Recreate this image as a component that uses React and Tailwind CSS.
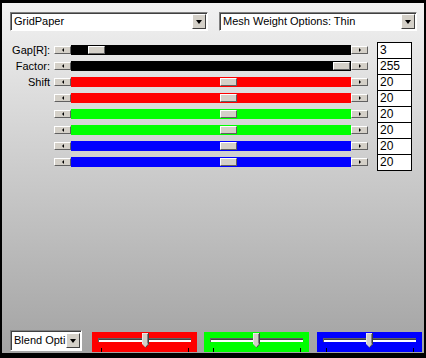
import React from "react";

const rows = [
  { label: "Gap[R]:", color: "bg-black", thumb: 17, value: "3" },
  { label: "Factor:", color: "bg-black", thumb: 262, value: "255" },
  { label: "Shift", color: "bg-[#ff0000]", thumb: 149, value: "20" },
  { label: "", color: "bg-[#ff0000]", thumb: 149, value: "20" },
  { label: "", color: "bg-[#00ff00]", thumb: 149, value: "20" },
  { label: "", color: "bg-[#00ff00]", thumb: 149, value: "20" },
  { label: "", color: "bg-[#0000ff]", thumb: 149, value: "20" },
  { label: "", color: "bg-[#0000ff]", thumb: 149, value: "20" },
];

const panels = [
  { color: "bg-[#ff0000]", thumb: 50 },
  { color: "bg-[#00ff00]", thumb: 49 },
  { color: "bg-[#0000ff]", thumb: 49 },
];

// little raised arrow button at each end of the scroll bars
const ArrowBtn = ({ dir }) => (
  <div className="w-[17px] h-[8px] bg-[#d4d0c8] border border-t-white border-l-white border-r-[#606060] border-b-[#606060] flex items-center justify-center shrink-0">
    <div
      className={
        dir === "left"
          ? "w-0 h-0 border-y-[2px] border-y-transparent border-r-[2px] border-r-black"
          : "w-0 h-0 border-y-[2px] border-y-transparent border-l-[2px] border-l-black"
      }
    />
  </div>
);

const DropArrow = () => (
  <div className="w-[14px] h-[15px] bg-[#d4d0c8] border border-t-white border-l-white border-r-[#404040] border-b-[#404040] flex items-center justify-center shrink-0">
    <div className="w-0 h-0 border-x-[3.5px] border-x-transparent border-t-[4px] border-t-black" />
  </div>
);

const Combo = ({ text, className }) => (
  <div
    className={
      "h-[19px] bg-white border border-t-[#808080] border-l-[#808080] border-b-white border-r-white shadow-[inset_1px_1px_0_#404040] flex items-center pl-[3px] pr-[1px] " +
      className
    }
  >
    <span className="flex-1 whitespace-nowrap text-black text-[11px] leading-none">
      {text}
    </span>
    <DropArrow />
  </div>
);

const ScrollRow = ({ row }) => (
  <div className="flex items-center h-[16px]">
    <div className="w-[40px] text-right text-[11px] leading-none text-black whitespace-nowrap">
      {row.label}
    </div>
    <div className="ml-[4px] w-[314px] flex items-center">
      <ArrowBtn dir="left" />
      <div className={"relative flex-1 h-[10px] " + row.color}>
        <div
          className="absolute top-[1px] w-[17px] h-[8px] bg-[#d4d0c8] border border-t-white border-l-white border-r-[#606060] border-b-[#606060]"
          style={{ left: row.thumb }}
        />
      </div>
      <ArrowBtn dir="right" />
    </div>
    <div className="ml-[9px] w-[35px] h-[17px] self-start -mb-px bg-white border border-black text-[12px] leading-[14px] pl-[2px] text-black">
      {row.value}
    </div>
  </div>
);

const Thumb = () => (
  <svg width="7" height="15" viewBox="0 0 7 15" className="absolute top-[1px]">
    <polygon points="0,0 7,0 7,11 3.5,14.5 0,11" fill="#d4d0c8" />
    <polyline points="0,11 0,0 6,0" fill="none" stroke="#ffffff" strokeWidth="1" />
    <polyline points="6.5,0 6.5,11 3.5,14.5" fill="none" stroke="#404040" strokeWidth="1" />
    <polyline points="5.5,1 5.5,10.5" fill="none" stroke="#808080" strokeWidth="1" />
  </svg>
);

const Panel = ({ p }) => (
  <div className={"relative w-[105px] h-[20px] " + p.color}>
    <div className="absolute left-[6px] top-[6px] w-[93px] h-[4px] bg-white border-t border-l border-t-[#606060] border-l-[#606060]">
      <div className="h-[1px] bg-[#404040]" />
    </div>
    <div style={{ left: p.thumb }} className="absolute top-0 w-[7px] h-[16px]">
      <Thumb />
    </div>
    <div className="absolute left-[9px] bottom-0 w-px h-[4px] bg-black" />
    <div className="absolute left-[96px] bottom-0 w-px h-[4px] bg-black" />
  </div>
);

export default function App() {
  return (
    <div
      className="w-[426px] h-[358px] border-black border-t-[3px] border-x-2 border-b-[5px] bg-gradient-to-b from-[#f2f2f2] to-[#a3a3a3] flex flex-col"
      style={{ fontFamily: '"Liberation Sans", Arial, sans-serif' }}
    >
      <div className="flex pt-[9px] pl-[8px] gap-[11px]">
        <Combo text="GridPaper" className="w-[198px]" />
        <Combo text="Mesh Weight Options: Thin" className="w-[198px]" />
      </div>

      <div className="mt-[11px] pl-[8px] flex flex-col">
        {rows.map((row, i) => (
          <ScrollRow key={i} row={row} />
        ))}
      </div>

      <div className="mt-auto mb-px flex items-end pl-[8px]">
        <Combo text="Blend Opti" className="w-[72px] h-[21px] mb-px" />
        <div className="ml-[10px] flex gap-[7px]">
          <Panel p={panels[0]} />
          <Panel p={panels[1]} />
          <div className="ml-px">
            <Panel p={panels[2]} />
          </div>
        </div>
      </div>
    </div>
  );
}
